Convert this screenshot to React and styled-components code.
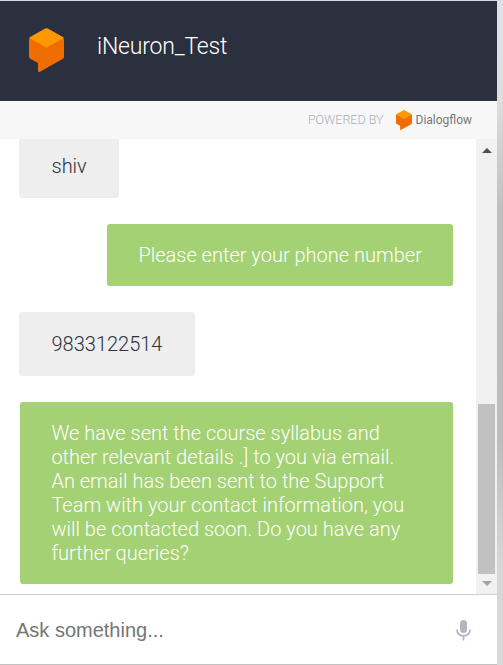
import React from "react";
import styled, { createGlobalStyle } from "styled-components";

const GlobalStyle = createGlobalStyle`
  * { box-sizing: border-box; }
  body { margin: 0; background: #fff; overflow: hidden; font-family: Roboto, "Liberation Sans", sans-serif; }
`;

const Page = styled.div`
  display: grid;
  grid-template-columns: 497px 6px;
  width: 503px;
  height: 665px;
  border-top: 1px solid #d3dcdf;
`;

const Backdrop = styled.div`
  background: linear-gradient(#e0e3e6 0, #dddddd 100px, #bfbfbf 210px, #bdbdbd 440px, #d6d6d6 560px, #dadada 100%);
`;

const Widget = styled.main`
  display: flex;
  flex-direction: column;
  height: 664px;
  border-bottom: 1px solid #c2c2c2;
`;

const Header = styled.header`
  display: flex;
  align-items: center;
  gap: 33px;
  height: 100px;
  padding: 0 0 2px 29px;
  background: #2b303e;
`;

const Title = styled.h1`
  margin: 0 0 7px;
  color: #fff;
  font-size: 23px;
  line-height: 28px;
  font-weight: 300;
  letter-spacing: -0.2px;
`;

const Powered = styled.div`
  display: flex;
  align-items: center;
  justify-content: flex-end;
  height: 38px;
  padding: 0 25px 1px 0;
  background: #f7f7f7;
  color: #a9aeb6;
  font-size: 12.5px;
  font-weight: 300;
`;

const Brand = styled.span`
  display: flex;
  align-items: center;
  gap: 4px;
  margin-left: 12px;
  color: #777;
  font-size: 12px;
  font-weight: 400;
`;

const Conversation = styled.section`
  display: flex;
  height: 455px;
`;

const Messages = styled.div`
  display: flex;
  flex: 1;
  flex-direction: column;
  align-items: flex-start;
  gap: 26px;
  padding: 0 23px 0 19px;
  overflow: hidden;
`;

const Bubble = styled.div`
  flex: none;
  align-self: ${({ $right }) => ($right ? "flex-end" : "flex-start")};
  width: ${({ $width }) => $width}px;
  padding: ${({ $top = 20 }) => $top}px 0 ${({ $bottom = 20 }) => $bottom}px ${({ $bot }) => ($bot ? 31.4 : 32.5)}px;
  border-radius: ${({ $clipped }) => ($clipped ? "0 0 3px 3px" : "3px")};
  background: ${({ $bot }) => ($bot ? "#a3d173" : "#eeeeee")};
  color: ${({ $bot }) => ($bot ? "#fff" : "#2b313f")};
  font-size: 20px;
  line-height: 24px;
  font-weight: 300;
  white-space: pre;
`;

const Scrollbar = styled.div`
  display: flex;
  flex-direction: column;
  align-items: center;
  width: 21px;
  padding: 9px 0 8px;
  background: #f1f1f1;
`;

const Thumb = styled.div`
  width: 17px;
  height: 170px;
  margin: 251px 0 auto;
  background: #c1c1c1;
`;

const Arrow = styled.i`
  width: 0;
  height: 0;
  border: solid transparent;
  border-width: ${({ $down }) => ($down ? "5px 5px 0" : "0 5px 5px")};
  border-color: ${({ $down }) => ($down ? "#a3a3a3 transparent transparent" : "transparent transparent #505050")};
`;

const Composer = styled.div`
  display: flex;
  flex: 1;
  align-items: center;
  justify-content: space-between;
  padding: 2px 26px 0 16px;
  border-top: 1px solid #cfcfcf;
`;

const Input = styled.input`
  flex: 1;
  min-width: 0;
  padding: 0;
  border: 0;
  outline: 0;
  background: transparent;
  font: 20px "Liberation Sans", Arial, sans-serif;
  &::placeholder { color: #757575; opacity: 1; }
`;

const Logo = ({ width, height }) => (
  <svg width={width} height={height} viewBox="0 0 35 44">
    <path d="M1.3 9.8 17.5 18.8 33.8 9.8Q35 10.2 35 11.5V28.8Q35 30.3 33.6 31.1L11 43.7Q9 44.7 9 42.8V34.9L1.3 30.7Q0 30 0 28.5V11.5Q0 10.2 1.3 9.8Z" fill="#ef6c00" />
    <path d="M16.2.5Q17.5-.2 18.8.5L34.3 9.3Q35 9.8 34.3 10.2L17.5 19.8.7 10.2Q0 9.8.7 9.3Z" fill="#ff9800" />
  </svg>
);

const MicIcon = () => (
  <svg width="15" height="21" viewBox="0 0 15 21">
    <rect x="4" y="0" width="7" height="13" rx="3.5" fill="#b3b7bd" />
    <path d="M.9 9.5C1.2 13.6 3.8 15.8 7.5 15.8s6.3-2.2 6.6-6.3M7.5 16v4.5" fill="none" stroke="#b3b7bd" strokeWidth="1.8" />
  </svg>
);

const reply = `We have sent the course syllabus and
other relevant details .] to you via email.
An email has been sent to the Support
Team with your contact information, you
will be contacted soon. Do you have any
further queries?`;

export default function App() {
  return (
    <Page>
      <GlobalStyle />
      <Widget>
        <Header>
          <Logo width={35} height={44} />
          <Title>iNeuron_Test</Title>
        </Header>
        <Powered>
          POWERED BY
          <Brand><Logo width={16} height={20} />Dialogflow</Brand>
        </Powered>
        <Conversation>
          <Messages>
            <Bubble $clipped $width={100} $top={15}>shiv</Bubble>
            <Bubble $bot $right $width={346} $top={19} $bottom={19}>Please enter your phone number</Bubble>
            <Bubble $width={176}>9833122514</Bubble>
            <Bubble $bot $right $width={433} $top={19} $bottom={19}>{reply}</Bubble>
          </Messages>
          <Scrollbar>
            <Arrow />
            <Thumb />
            <Arrow $down />
          </Scrollbar>
        </Conversation>
        <Composer>
          <Input placeholder="Ask something..." aria-label="Ask something" />
          <MicIcon />
        </Composer>
      </Widget>
      <Backdrop />
    </Page>
  );
}
